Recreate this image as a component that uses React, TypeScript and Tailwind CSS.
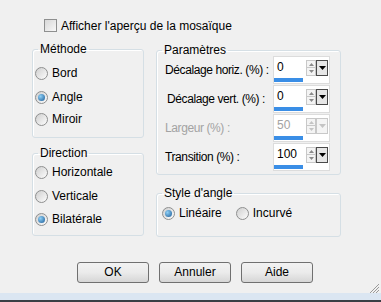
import React from "react";

const font = { fontFamily: '"Liberation Sans", Arial, sans-serif' };

function Radio({ checked }: { checked?: boolean }) {
  return (
    <span className="w-[13px] h-[13px] shrink-0 rounded-full border border-[#8e8f8f] bg-linear-to-br from-[#cfcfcf] to-[#fdfdfd] flex items-center justify-center">
      {checked && (
        <span className="w-[7px] h-[7px] rounded-full bg-[radial-gradient(circle_at_35%_35%,#8fd0f6,#1a5a96)]" />
      )}
    </span>
  );
}

function RadioRow({
  label,
  checked,
  className,
}: {
  label: string;
  checked?: boolean;
  className?: string;
}) {
  return (
    <div className={`flex items-center gap-[4px] h-[14px] ${className || ""}`}>
      <Radio checked={checked} />
      <span className="leading-[14px] whitespace-nowrap">{label}</span>
    </div>
  );
}

function Group({
  title,
  className,
  bodyClass,
  children,
}: {
  title: string;
  className?: string;
  bodyClass?: string;
  children: React.ReactNode;
}) {
  return (
    <fieldset
      className={`border border-[#d5dfe5] rounded-[3px] shadow-[inset_1px_1px_0_#ffffff] ${className || ""}`}
    >
      <legend className="ml-[5px] px-[2px] leading-[14px]">{title}</legend>
      <div className={bodyClass}>{children}</div>
    </fieldset>
  );
}

function Arrow({ up, color }: { up?: boolean; color: string }) {
  return (
    <svg width="5" height="3" viewBox="0 0 5 3">
      <path d={up ? "M0 3 L2.5 0 L5 3 Z" : "M0 0 L5 0 L2.5 3 Z"} fill={color} />
    </svg>
  );
}

function Spin({
  value,
  disabled,
}: {
  value: string;
  disabled?: boolean;
}) {
  const arrow = disabled ? "#c4c4c4" : "#8a8a8a";
  return (
    <div className="w-[57px] h-[28px] shrink-0 bg-white border border-[#dcdcdc] flex flex-col pt-[3px]">
      <div className="flex h-[16px]">
        <span
          className={`w-[32px] pl-[3px] leading-[14px] ${disabled ? "text-[#a3a3a3]" : "text-black"}`}
        >
          {value}
        </span>
        <div className="w-[10px] h-[16px] flex flex-col">
          <div className="h-[8px] border border-[#c8c8c8] bg-[#f4f4f4] flex items-center justify-center">
            <Arrow up color={arrow} />
          </div>
          <div className="h-[8px] border border-t-0 border-[#c8c8c8] bg-[#f4f4f4] flex items-center justify-center">
            <Arrow color={arrow} />
          </div>
        </div>
        <div
          className={`w-[12px] h-[16px] border flex items-center justify-center ${
            disabled ? "border-[#c8c8c8] bg-[#f4f4f4]" : "border-[#4a4a4a] bg-[#e6e6e6]"
          }`}
        >
          <svg width="7" height="4" viewBox="0 0 7 4">
            <path d="M0 0 L7 0 L3.5 4 Z" fill={disabled ? "#c4c4c4" : "#000"} />
          </svg>
        </div>
      </div>
      <div className="mt-[2px] h-[4px] w-[29px] bg-[#3a8ee6]" />
    </div>
  );
}

function ParamRow({
  label,
  value,
  disabled,
  labelClass,
}: {
  label: string;
  value: string;
  disabled?: boolean;
  labelClass?: string;
}) {
  return (
    <div className="flex items-center h-[28px]">
      <span
        className={`w-[108px] whitespace-nowrap tracking-[-0.4px] ${disabled ? "text-[#a3a3a3]" : "text-black"} ${labelClass || ""}`}
      >
        {label}
      </span>
      <Spin value={value} disabled={disabled} />
    </div>
  );
}

function DlgButton({ children }: { children: React.ReactNode }) {
  return (
    <button className="w-[72px] h-[21px] rounded-[3px] border border-[#707070] bg-linear-to-b from-[#f2f2f2] via-[#ebebeb] to-[#d6d6d6] text-black leading-[19px] text-center">
      {children}
    </button>
  );
}

export default function App() {
  return (
    <div
      className="relative w-[381px] h-[302px] bg-[#f0f0f0] flex flex-col text-[12px] text-black overflow-hidden"
      style={font}
    >
      <div className="mt-[19px] ml-[44px] h-[13px] flex items-center gap-[4px]">
        <span className="w-[13px] h-[13px] border border-[#8e8f8f] bg-linear-to-br from-[#d8d8d8] to-[#f8f8f8]" />
        <span className="leading-[14px]">Afficher l'aperçu de la mosaïque</span>
      </div>

      <div className="mt-[10px] flex">
        <div className="ml-[32px] w-[112px] flex flex-col">
          <Group title="Méthode" className="h-[96px]" bodyClass="pl-[2px]">
            <RadioRow label="Bord" className="mt-[10px]" />
            <RadioRow label="Angle" checked className="mt-[10px]" />
            <RadioRow label="Miroir" className="mt-[8px]" />
          </Group>
          <Group title="Direction" className="mt-[8px] h-[90px]" bodyClass="pl-[2px]">
            <RadioRow label="Horizontale" className="mt-[5px]" />
            <RadioRow label="Verticale" className="mt-[10px]" />
            <RadioRow label="Bilatérale" checked className="mt-[9px]" />
          </Group>
        </div>

        <div className="ml-[12px] mt-[1px] w-[185px] flex flex-col">
          <Group title="Paramètres" className="h-[132px]" bodyClass="pl-[8px] -mt-[1px] flex flex-col gap-[1px]">
            <ParamRow label="Décalage horiz. (%) :" value="0" />
            <ParamRow label="Décalage vert. (%) :" value="0" labelClass="pl-[2px]" />
            <ParamRow label="Largeur (%) :" value="50" disabled />
            <ParamRow label="Transition (%) :" value="100" />
          </Group>
          <Group title="Style d'angle" className="mt-[11px] h-[51px]" bodyClass="pl-[5px] mt-[6px] flex items-center">
            <RadioRow label="Linéaire" checked />
            <RadioRow label="Incurvé" className="ml-[14px]" />
          </Group>
        </div>
      </div>

      <div className="mt-[25px] ml-[77px] flex gap-[10px]">
        <DlgButton>OK</DlgButton>
        <DlgButton>Annuler</DlgButton>
        <DlgButton>Aide</DlgButton>
      </div>

      <div className="mt-[10px] h-[7px] bg-[#dbe6f2]" />
      <div className="h-[2px] bg-[#3a3f45]" />

      <svg
        className="absolute right-[1px] bottom-[9px]"
        width="12"
        height="10"
        viewBox="0 0 12 10"
      >
        <path d="M11 1 L2 10 M11 4 L5 10 M11 7 L8 10" stroke="#9a9a9a" strokeWidth="1" />
      </svg>
    </div>
  );
}
